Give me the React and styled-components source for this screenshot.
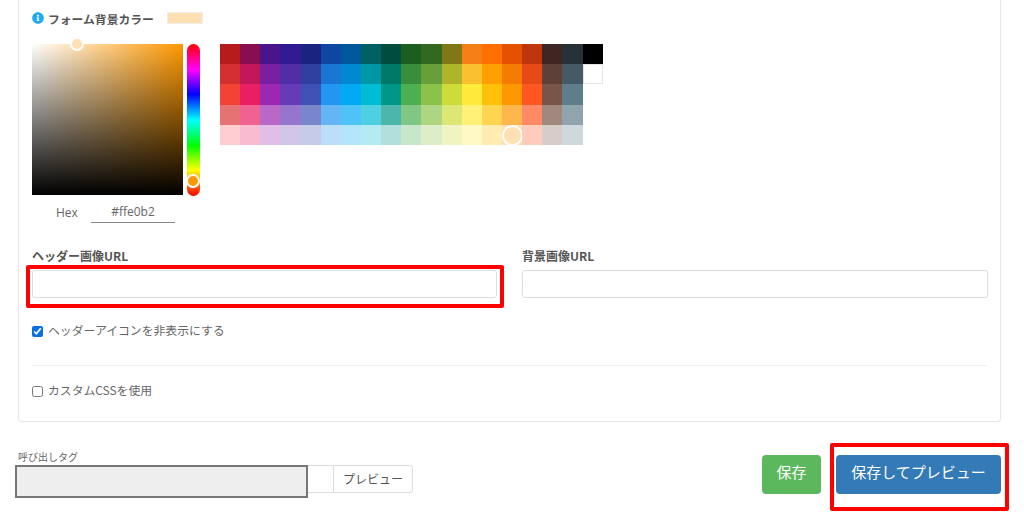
import React from 'react';
import styled, { createGlobalStyle } from 'styled-components';
import { FaInfoCircle } from 'react-icons/fa';

const GlobalStyle = createGlobalStyle`
  body {
    margin: 0;
    background: #fff;
    font-family: "Noto Sans CJK JP", "Open Sans", sans-serif;
    color: #555;
  }
`;

const PALETTE = [
  ['#b71c1c', '#880e4f', '#4a148c', '#311b92', '#1a237e', '#0d47a1', '#01579b', '#006064', '#004d40', '#1b5e20', '#33691e', '#827717', '#f57f17', '#ff6f00', '#e65100', '#bf360c', '#3e2723', '#263238', '#000000'],
  ['#d32f2f', '#c2185b', '#7b1fa2', '#512da8', '#303f9f', '#1976d2', '#0288d1', '#0097a7', '#00796b', '#388e3c', '#689f38', '#afb42b', '#fbc02d', '#ffa000', '#f57c00', '#e64a19', '#5d4037', '#455a64', '#ffffff'],
  ['#f44336', '#e91e63', '#9c27b0', '#673ab7', '#3f51b5', '#2196f3', '#03a9f4', '#00bcd4', '#009688', '#4caf50', '#8bc34a', '#cddc39', '#ffeb3b', '#ffc107', '#ff9800', '#ff5722', '#795548', '#607d8b'],
  ['#e57373', '#f06292', '#ba68c8', '#9575cd', '#7986cb', '#64b5f6', '#4fc3f7', '#4dd0e1', '#4db6ac', '#81c784', '#aed581', '#dce775', '#fff176', '#ffd54f', '#ffb74d', '#ff8a65', '#a1887f', '#90a4ae'],
  ['#ffcdd2', '#f8bbd0', '#e1bee7', '#d1c4e9', '#c5cae9', '#bbdefb', '#b3e5fc', '#b2ebf2', '#b2dfdb', '#c8e6c9', '#dcedc8', '#f0f4c3', '#fff9c4', '#ffecb3', '#ffe0b2', '#ffccbc', '#d7ccc8', '#cfd8dc'],
];

const Page = styled.div`
  width: 1024px;
  height: 527px;
  overflow: hidden;
  position: relative;
`;

const Panel = styled.section`
  box-sizing: border-box;
  width: 983px;
  height: 422px;
  margin-left: 18px;
  padding: 11px 13px 0;
  border: 1px solid #e6e6e6;
  border-top: none;
  border-radius: 0 0 4px 4px;
`;

const TitleRow = styled.div`
  display: flex;
  align-items: center;
  height: 14px;
`;

const InfoIcon = styled(FaInfoCircle)`
  width: 12px;
  height: 12px;
  color: #1fa8f8;
  margin-right: 4px;
`;

const Title = styled.span`
  font-size: 11.8px;
  font-weight: 700;
  width: 119px;
  white-space: nowrap;
`;

const TitleSwatch = styled.span`
  width: 36px;
  height: 12px;
  background: #ffe0b2;
  border: 1px solid #eee;
  box-sizing: border-box;
`;

const PickerRow = styled.div`
  display: flex;
  margin-top: 19px;
`;

const SaturationColumn = styled.div`
  width: 151px;
`;

const Saturation = styled.div`
  position: relative;
  height: 151px;
  background:
    linear-gradient(to top, #000, rgba(0, 0, 0, 0)),
    linear-gradient(to right, #fff, #ff9800);
`;

const Pointer = styled.span`
  position: absolute;
  box-sizing: border-box;
  width: 14px;
  height: 14px;
  left: ${p => p.$left}px;
  top: ${p => p.$top}px;
  border-radius: 50%;
  border: 2px solid #fff;
  background: ${p => p.$color};
`;

const HexRow = styled.div`
  display: flex;
  margin-top: 8px;
  height: 20px;
`;

const HexLabel = styled.span`
  width: 59px;
  padding-left: 24px;
  box-sizing: border-box;
  font: 12px/20px "Open Sans", sans-serif;
  color: #666;
`;

const HexValue = styled.span`
  width: 84px;
  box-sizing: border-box;
  border-bottom: 1px solid #888;
  text-align: center;
  font: 12px/18px "Open Sans", sans-serif;
  color: #666;
`;

const HueBar = styled.div`
  position: relative;
  width: 13px;
  height: 152px;
  margin-left: 4px;
  border-radius: 7px;
  background: linear-gradient(to bottom, #f00 0%, #f0f 17%, #00f 33%, #0ff 50%, #0f0 67%, #ff0 83%, #f00 100%);
`;

const Swatches = styled.div`
  margin-left: 20px;
  display: flex;
  flex-direction: column;
`;

const SwatchRow = styled.div`
  display: flex;
`;

const Swatch = styled.span`
  position: relative;
  box-sizing: border-box;
  width: 20.15px;
  height: 20.2px;
  background: ${p => p.$color};
  border: ${p => (p.$color === '#ffffff' ? '1px solid #e4e4e4' : 'none')};
`;

const SwatchRing = styled.span`
  position: absolute;
  box-sizing: border-box;
  width: 21px;
  height: 21px;
  left: 0;
  top: 0;
  border-radius: 50%;
  border: 2px solid #fff;
`;

const UrlRow = styled.div`
  display: grid;
  grid-template-columns: 465px 466px;
  column-gap: 25px;
  margin-top: 26px;
`;

const Field = styled.div`
  position: relative;
`;

const FieldLabel = styled.label`
  display: block;
  font-size: 12px;
  font-weight: 700;
  line-height: 14px;
  height: 21px;
`;

const TextInput = styled.input`
  display: block;
  box-sizing: border-box;
  width: 100%;
  height: 28px;
  background: #fff;
  border: 1px solid #ddd;
  border-radius: 3px;
  outline: none;
`;

const Highlight = styled.span`
  position: absolute;
  box-sizing: border-box;
  left: ${p => p.$left}px;
  top: ${p => p.$top}px;
  width: ${p => p.$width}px;
  height: ${p => p.$height}px;
  border: 4px solid #f00;
  border-radius: 2px;
  pointer-events: none;
`;

const CheckRow = styled.label`
  display: flex;
  align-items: center;
  height: 18px;
  margin-top: ${p => p.$top}px;
  font-size: 11.85px;
  line-height: 16px;
  color: #666;
`;

const Check = styled.input.attrs({ type: 'checkbox' })`
  width: 11px;
  height: 11px;
  margin: 3px 5px 0 0;
  accent-color: #0b6fe0;
`;

const Divider = styled.hr`
  border: none;
  border-top: 1px solid #eee;
  margin: 26px 0 15px;
`;

const Footer = styled.div`
  display: flex;
  justify-content: space-between;
  align-items: flex-start;
  margin: 33px 23px 0 18px;
`;

const TagBlock = styled.div`
  width: 395px;
  margin-top: -5px;
`;

const TagLabel = styled.div`
  font-size: 10px;
  line-height: 13px;
  height: 15px;
  color: #666;
`;

const InputGroup = styled.div`
  position: relative;
  display: flex;
  height: 28px;
`;

const GroupInput = styled.input`
  flex: 1;
  min-width: 0;
  box-sizing: border-box;
  border: 1px solid #ddd;
  border-right: none;
  border-radius: 3px 0 0 3px;
  outline: none;
`;

const GroupButton = styled.button`
  width: 80px;
  box-sizing: border-box;
  background: #fff;
  border: 1px solid #ddd;
  border-radius: 0 3px 3px 0;
  font: 12px "Noto Sans CJK JP", sans-serif;
  color: #555;
  padding: 0 0 2px;
`;

const MaskedInput = styled.span`
  position: absolute;
  box-sizing: border-box;
  left: -3px;
  top: 0;
  width: 293px;
  height: 33px;
  background: #eee;
  border: 2px solid #777;
`;

const Actions = styled.div`
  display: flex;
  gap: 15px;
`;

const ActionButton = styled.button`
  height: 39px;
  width: ${p => p.$width}px;
  box-sizing: border-box;
  border: none;
  border-radius: 4px;
  background: ${p => p.$bg};
  color: #fff;
  font: 15px "Noto Sans CJK JP", sans-serif;
  padding: 0 0 6px;
`;

const App = () => (
  <Page>
    <GlobalStyle />
    <Panel>
      <TitleRow>
        <InfoIcon />
        <Title>フォーム背景カラー</Title>
        <TitleSwatch />
      </TitleRow>
      <PickerRow>
        <SaturationColumn>
          <Saturation>
            <Pointer $left={38} $top={-7} $color="#ffe0b2" />
          </Saturation>
          <HexRow>
            <HexLabel>Hex</HexLabel>
            <HexValue>#ffe0b2</HexValue>
          </HexRow>
        </SaturationColumn>
        <HueBar>
          <Pointer $left={-1} $top={130} $color="#ff9800" />
        </HueBar>
        <Swatches>
          {PALETTE.map((row, i) => (
            <SwatchRow key={i}>
              {row.map(color => (
                <Swatch key={color} $color={color}>
                  {color === '#ffe0b2' && <SwatchRing />}
                </Swatch>
              ))}
            </SwatchRow>
          ))}
        </Swatches>
      </PickerRow>
      <UrlRow>
        <Field>
          <FieldLabel>ヘッダー画像URL</FieldLabel>
          <TextInput type="text" />
          <Highlight $left={-6} $top={16} $width={478} $height={43} />
        </Field>
        <Field>
          <FieldLabel>背景画像URL</FieldLabel>
          <TextInput type="text" />
        </Field>
      </UrlRow>
      <CheckRow $top={23}>
        <Check defaultChecked />
        ヘッダーアイコンを非表示にする
      </CheckRow>
      <Divider />
      <CheckRow $top={0}>
        <Check />
        カスタムCSSを使用
      </CheckRow>
    </Panel>
    <Footer>
      <TagBlock>
        <TagLabel>呼び出しタグ</TagLabel>
        <InputGroup>
          <GroupInput type="text" />
          <GroupButton>プレビュー</GroupButton>
          <MaskedInput />
        </InputGroup>
      </TagBlock>
      <Actions>
        <ActionButton $width={59} $bg="#5cb85c">保存</ActionButton>
        <ActionButton $width={165} $bg="#337ab7">保存してプレビュー</ActionButton>
      </Actions>
    </Footer>
    <Highlight $left={830} $top={443} $width={179} $height={68} />
  </Page>
);

export default App;
